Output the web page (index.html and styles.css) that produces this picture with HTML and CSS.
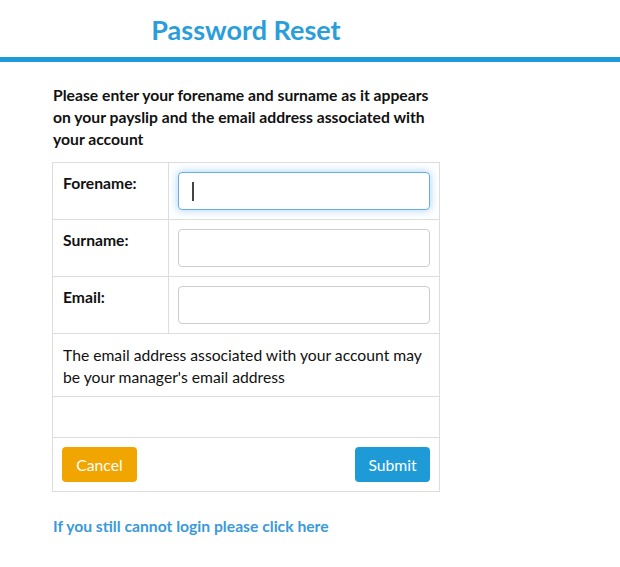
FILE: index.html
```html
<!DOCTYPE html>
<html>
	<head>
		<meta charset="utf-8"/>
		<meta name="viewport" content="width=device-width"/>
		<link rel="stylesheet" href="styles.css">
	</head>
	<body>
		<div class="header">
			<h1>Password Reset</h1>
		</div>
		<div class="content">
			<p class="intro">Please enter your forename and surname as it appears on your payslip and the email address associated with your account</p>
			<form>
				<table class="reset">
					<tr>
						<td class="label">Forename:</td>
						<td class="field">
							<div class="focused">
								<input type="text" autofocus>
								<span class="caret"></span>
							</div>
						</td>
					</tr>
					<tr>
						<td class="label">Surname:</td>
						<td class="field"><input type="text"></td>
					</tr>
					<tr>
						<td class="label">Email:</td>
						<td class="field"><input type="text"></td>
					</tr>
					<tr>
						<td class="note" colspan="2">The email address associated with your account may be your manager's email address</td>
					</tr>
					<tr>
						<td class="blank" colspan="2"></td>
					</tr>
					<tr>
						<td class="actions" colspan="2">
							<div class="buttons">
								<button type="button" class="btn cancel">Cancel</button>
								<button type="button" class="btn submit">Submit</button>
							</div>
						</td>
					</tr>
				</table>
			</form>
			<a class="help" href="#">If you still cannot login please click here</a>
		</div>
	</body>
</html>
```

FILE: styles.css
```css
body{
	margin:0;
	font-family:Lato,"Liberation Sans",sans-serif;
	color:#111;
	background:#fff;
}
.header{
	height:57px;
	border-bottom:5px solid #1e9ad6;
}
.header h1{
	margin:0;
	width:388px;
	margin-left:52px;
	text-align:center;
	font-size:27px;
	font-weight:700;
	line-height:30px;
	padding-top:15px;
	color:#2a9ed9;
}
.content{
	width:388px;
	margin-left:52px;
}
.intro{
	margin:22px 0 12px 1px;
	font-size:15.7px;
	font-weight:700;
	line-height:22px;
}
.reset{
	width:100%;
	border-collapse:collapse;
	font-size:15.7px;
}
.reset td{
	border:1px solid #ddd;
	vertical-align:top;
}
.reset .label{
	width:95px;
	padding:10px 10px 11px 10px;
	font-weight:700;
	line-height:20px;
}
.reset .field{
	padding:9px;
}
.field input{
	display:block;
	box-sizing:border-box;
	width:100%;
	height:38px;
	padding:0 13px;
	border:1px solid #ccc;
	border-radius:4px;
	font-family:inherit;
	font-size:16px;
	outline:none;
}
.field input:focus{
	border-color:#66afe9;
	box-shadow:0 0 8px rgba(102,175,233,0.6);
}
.focused{
	position:relative;
}
.caret{
	position:absolute;
	left:14px;
	top:10px;
	width:2px;
	height:19px;
	background:#444;
}
.reset .note{
	padding:10px 6px 8px 10px;
	line-height:22px;
}
.reset .blank{
	height:40px;
	padding:0;
}
.reset .actions{
	padding:9px;
}
.buttons{
	display:flex;
	justify-content:space-between;
}
.btn{
	width:75px;
	height:35px;
	border:none;
	border-radius:4px;
	color:#fff;
	font-family:inherit;
	font-size:15.7px;
	padding:0;
}
.cancel{
	background:#f0a500;
}
.submit{
	background:#1e9bd7;
}
.help{
	display:block;
	margin:23px 0 0 1px;
	font-size:15.7px;
	font-weight:700;
	line-height:22px;
	color:#3a9ad9;
	text-decoration:none;
}
```
